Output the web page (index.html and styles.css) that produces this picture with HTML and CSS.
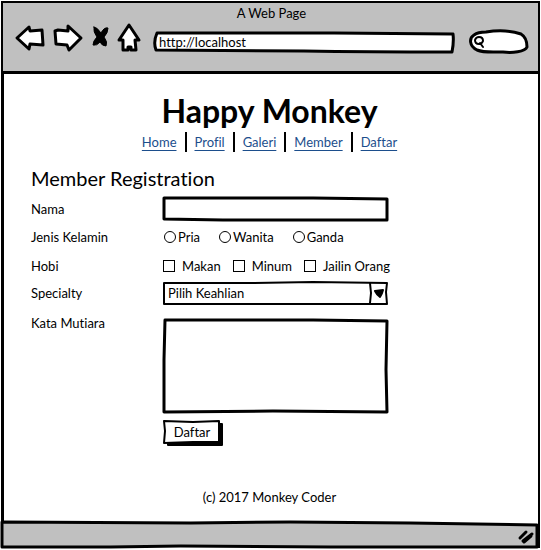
FILE: index.html
```html
<!DOCTYPE html>
<html lang="id">
<head>
<meta charset="utf-8">
<meta name="viewport" content="width=device-width, initial-scale=1">
<title>Happy Monkey</title>
<link rel="stylesheet" href="styles.css">
</head>
<body>
<div class="window">
  <header class="toolbar">
    <div class="window-title">A Web Page</div>
    <div class="tools">
      <button class="tool" type="button" aria-label="Back"><svg width="30" height="28" viewBox="0 0 30 28"><path d="M2 14 14 3 15 7 27 6 28 21 15 20 14 25Z"/></svg></button>
      <button class="tool" type="button" aria-label="Forward"><svg width="30" height="28" viewBox="0 0 30 28"><path d="M2 7 5 6 15 7 15 2 28 14 16 26 14 21 3 20Z"/></svg></button>
      <button class="tool stop" type="button" aria-label="Stop"><svg width="18" height="28" viewBox="0 0 18 28"><path class="solid" d="M3 3Q6 3 10 9Q13 3 17 4Q17 9 13 13Q17 18 15 22Q11 22 9 18Q6 22 2 21Q2 17 6 13Q2 8 3 3Z"/></svg></button>
      <button class="tool" type="button" aria-label="Home"><svg width="24" height="28" viewBox="0 0 24 28"><path d="M12 1 22 16 18 16 19 26 14 26 14 23 11 23 11 26 6 26 6 16 2 16Z"/></svg></button>
      <div class="address sketch">
        <svg class="outline" viewBox="0 0 300 20" preserveAspectRatio="none" aria-hidden="true"><path d="M3 1Q80 1 180 1L299 2Q300 10 298 20Q210 20 150 19L2 18Q-1 10 3 1Z"/></svg>
        <input type="text" aria-label="Address" value="http://localhost">
      </div>
      <div class="search sketch">
        <svg class="outline" viewBox="0 0 58 23" preserveAspectRatio="none" aria-hidden="true"><path d="M16 2C28 0 42 1 51 4C56 7 57 12 57 17C55 22 42 23 33 22C21 22 14 23 7 20C-1 16-1 8 4 5Q8 2 16 2Z"/></svg>
        <svg class="lens" width="11" height="12" viewBox="0 0 11 12" aria-hidden="true"><path d="M5 1Q9 1 9 5Q8 8 5 8Q1 8 1 4Q2 1 5 1M6 7 9 11"/></svg>
        <input type="search" aria-label="Search">
      </div>
    </div>
  </header>

  <main class="page">
    <h1>Happy Monkey</h1>
    <nav class="menu">
      <a href="#home">Home</a><a href="#profil">Profil</a><a href="#galeri">Galeri</a><a href="#member">Member</a><a href="#daftar">Daftar</a>
    </nav>

    <form class="registration">
      <h2>Member Registration</h2>
      <div class="row">
        <label for="nama">Nama</label>
        <div class="field sketch">
          <svg class="outline bold" viewBox="0 0 225 24" preserveAspectRatio="none" aria-hidden="true"><path d="M1 1 80 1 150 1 224 2 224 13 224 23 120 23 60 23 1 22 1 12Z"/></svg>
          <input id="nama" type="text">
        </div>
      </div>
      <div class="row genders" role="group" aria-labelledby="jenis">
        <span id="jenis">Jenis Kelamin</span>
        <div class="choices">
          <label><input type="radio" name="jenis">Pria</label>
          <label><input type="radio" name="jenis">Wanita</label>
          <label><input type="radio" name="jenis">Ganda</label>
        </div>
      </div>
      <div class="row hobbies" role="group" aria-labelledby="hobi">
        <span id="hobi">Hobi</span>
        <div class="choices">
          <label><input type="checkbox" name="hobi">Makan</label>
          <label><input type="checkbox" name="hobi">Minum</label>
          <label><input type="checkbox" name="hobi">Jailin Orang</label>
        </div>
      </div>
      <div class="row">
        <label for="keahlian">Specialty</label>
        <div class="field sketch">
          <svg class="outline" viewBox="0 0 225 24" preserveAspectRatio="none" aria-hidden="true"><path d="M1 2 90 2 150 1 224 2 223 11 224 23 110 23 1 23 1 11Z"/></svg>
          <select id="keahlian"><option>Pilih Keahlian</option></select>
          <svg class="arrow" width="19" height="22" viewBox="0 0 19 22" aria-hidden="true"><path d="M1 1 2 11 1 21"/><path class="solid" d="M6 9 14 8Q13 12 11 15Q8 13 6 9Z"/></svg>
        </div>
      </div>
      <div class="row message">
        <label for="mutiara">Kata Mutiara</label>
        <div class="field sketch">
          <svg class="outline" viewBox="0 0 225 93" preserveAspectRatio="none" aria-hidden="true"><path d="M2 1 80 1 150 1 224 2 223 50 224 92 110 91 1 92 1 40Z"/></svg>
          <textarea id="mutiara"></textarea>
        </div>
      </div>
      <div class="row submit">
        <button type="submit" class="sketch">
          <svg class="outline" viewBox="0 0 60 26" preserveAspectRatio="none" aria-hidden="true"><path class="solid" d="M5 5 59 4 59 25 5 25Z"/><path d="M1 1 30 2 56 1 56 22 30 22 1 23 2 11Z"/></svg>
          <span>Daftar</span>
        </button>
      </div>
    </form>
    <footer class="copyright">(c) 2017 Monkey Coder</footer>
  </main>

  <div class="statusbar">
    <svg class="outline bold" viewBox="0 0 538 27" preserveAspectRatio="none" aria-hidden="true"><path d="M1 1 190 2 290 1 410 2 537 4 537 26 330 26 180 25 110 26 1 26Z"/></svg>
    <svg class="grip" width="16" height="14" viewBox="0 0 16 14" aria-hidden="true"><path d="M2 8 7 3M3 7 8 2M5 11 14 4M6 12 13 6"/></svg>
  </div>
</div>
</body>
</html>
```
FILE: styles.css
```css
* { box-sizing: border-box; }

body {
  margin: 0;
  background: #fff;
  color: #000;
  font: 13px/18px Lato, "Liberation Sans", sans-serif;
  font-variant-ligatures: none;
}

input, select, textarea, button {
  margin: 0;
  padding: 0;
  border: 0;
  background: none;
  color: inherit;
  font: inherit;
}

svg { display: block; overflow: visible; }

path {
  fill: #fff;
  stroke: #000;
  stroke-width: 2px;
  stroke-linejoin: round;
  stroke-linecap: round;
  vector-effect: non-scaling-stroke;
}

path.solid { fill: #000; }

.window {
  display: flex;
  flex-direction: column;
  min-height: 100vh;
  padding: 1px 1px 2px;
}

.toolbar {
  padding: 1px 10px 0 12px;
  height: 73px;
  border: 2px solid #000;
  border-bottom-width: 3px;
  background: #c0c0c0;
}

.window-title { text-align: center; }

.tools {
  display: flex;
  align-items: center;
  gap: 8px;
}

.tool path { stroke-width: 3px; }
.tool path.solid { stroke-width: 1px; }

.sketch {
  display: flex;
  position: relative;
}

.outline {
  position: absolute;
  inset: 0;
  width: 100%;
  height: 100%;
}

.sketch > input,
.sketch > select,
.sketch > textarea,
.sketch > span {
  position: relative;
  flex: 1;
  min-width: 0;
  padding: 0 5px;
}

.bold path,
.address .outline path,
.search .outline path,
.message .outline path { stroke-width: 3px; }

.address {
  flex: 1;
  height: 20px;
  margin: 8px 8px 0 5px;
}

.search {
  width: 58px;
  height: 23px;
  margin-top: 8px;
  align-items: center;
}

.lens {
  position: relative;
  margin-left: 4px;
}

.lens path { fill: none; }

.page {
  flex: 1;
  padding: 17px 30px 0 27px;
  border: solid #000;
  border-width: 0 2px 0 3px;
}

h1 {
  margin: 0;
  font-size: 32px;
  line-height: 40px;
  text-align: center;
}

.menu {
  display: flex;
  justify-content: center;
  margin-top: 1px;
}

.menu a {
  padding: 0 8px;
  color: #1c4e8c;
  line-height: 20px;
  text-underline-offset: 3px;
}

.menu a + a { border-left: 2px solid #000; }

h2 {
  margin: 14px 0 7px;
  font-size: 20px;
  font-weight: 400;
  line-height: 24px;
}

.row {
  display: grid;
  grid-template-columns: 132px 1fr;
  align-items: center;
}

.field {
  width: 100%;
  max-width: 225px;
  height: 24px;
}

.genders { margin: 7px 0 11px; }
.hobbies { margin-bottom: 6px; }

.choices,
.choices label {
  display: flex;
  align-items: center;
}

.genders .choices { gap: 18px; }
.genders label { gap: 2px; }
.hobbies .choices { gap: 12px; }
.hobbies label { gap: 7px; }

.choices input {
  appearance: none;
  width: 12px;
  height: 12px;
  border: 1px solid #000;
}

.choices input[type="radio"] {
  margin-left: 1px;
  border-radius: 50%;
}

select { appearance: none; }

.arrow {
  position: absolute;
  top: 1px;
  right: 0;
  pointer-events: none;
}

.message {
  align-items: start;
  margin-top: 14px;
}

.message label { margin-top: -5px; }
.message .field { height: 94px; }
textarea { resize: none; }

.submit { margin-top: 7px; }

.submit button {
  grid-column: 2;
  justify-self: start;
  min-width: 60px;
  height: 26px;
  align-items: center;
}

.submit span {
  padding: 0 12px 2px 10px;
}

.copyright {
  margin: 42px 0 14px;
  text-align: center;
}

.statusbar {
  display: flex;
  position: relative;
  justify-content: flex-end;
  align-items: center;
  height: 27px;
  padding: 4px 4px 0;
  border-right: 2px solid #000;
}

.statusbar .outline path { fill: #c0c0c0; }

.grip { position: relative; }
.grip path { fill: none; stroke-width: 3px; }
```
